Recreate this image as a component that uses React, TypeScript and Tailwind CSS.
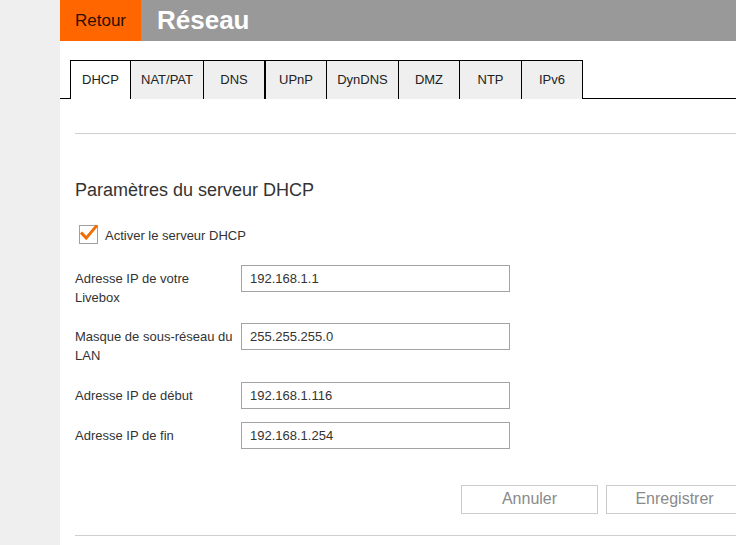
const TABS = [
  { label: "DHCP", w: "w-[61px]", active: true },
  { label: "NAT/PAT", w: "w-[73px]" },
  { label: "DNS", w: "w-[62px]", thick: true },
  { label: "UPnP", w: "w-[61px]" },
  { label: "DynDNS", w: "w-[72px]" },
  { label: "DMZ", w: "w-[61px]" },
  { label: "NTP", w: "w-[62px]" },
  { label: "IPv6", w: "w-[61px]" },
];

const CheckIcon = () => (
  <svg width="21" height="20" viewBox="0 0 21 20" aria-hidden>
    <rect x="1.5" y="1.5" width="18" height="18" fill="#fff" stroke="#a0a0a0" />
    <path d="M4 9.5l4.2 4.6L18 2.5" fill="none" stroke="#f16e00" strokeWidth="3" strokeLinecap="square" />
  </svg>
);

function Field({ label, value, className }: { label: string[]; value: string; className?: string }) {
  return (
    <div className={`flex items-start ${className ?? ""}`}>
      <div className="w-[166px] pt-[4px] text-[13px] leading-[19px] text-[#333]">
        {label.map((l) => (
          <div key={l}>{l}</div>
        ))}
      </div>
      <input
        readOnly
        value={value}
        className="h-[27px] w-[269px] border border-[#a3a3a3] bg-white px-[8px] text-[13px] text-[#333] outline-none"
      />
    </div>
  );
}

export default function App() {
  return (
    <div
      className="flex min-h-screen overflow-hidden bg-white"
      style={{ fontFamily: '"Liberation Sans", Arial, sans-serif' }}
    >
      {/* left rail */}
      <div className="w-[60px] shrink-0 bg-[#efefef]" />

      <div className="flex min-w-0 flex-1 flex-col">
        {/* header */}
        <header className="flex h-[41px]">
          <div className="flex w-[81px] items-center justify-center bg-[#ff6600] text-[17px] text-[#2a0f00]">
            Retour
          </div>
          <div className="flex flex-1 items-center bg-[#999999] pl-[16px] text-[26px] font-bold text-white">
            Réseau
          </div>
        </header>

        {/* tabs */}
        <nav className="mt-[19px] flex h-[39px]">
          <div className="w-[10px] border-b border-black" />
          {TABS.map((t) => (
            <div
              key={t.label}
              className={`flex ${t.w} shrink-0 items-center justify-center border-t border-black text-[13px] text-[#222] ${
                t.thick ? "border-r-2" : "border-r"
              } ${t.active ? "border-l bg-white" : "bg-[#efefef]"}`}
            >
              {t.label}
            </div>
          ))}
          <div className="flex-1 border-b border-black" />
        </nav>

        <div className="ml-[15px]">
          <div className="mt-[34px] border-t border-[#cfcfcf]" />

          <h2 className="mt-[45px] text-[18px] leading-[22px] text-[#333]">Paramètres du serveur DHCP</h2>

          <label className="mt-[21px] flex items-center gap-[6px] pl-[3px] text-[13px] text-[#333]">
            <CheckIcon />
            <span className="pt-[4px]">Activer le serveur DHCP</span>
          </label>

          <div className="w-[668px]">
            <Field className="mt-[19px]" label={["Adresse IP de votre", "Livebox"]} value="192.168.1.1" />
            <Field className="mt-[16px]" label={["Masque de sous-réseau du", "LAN"]} value="255.255.255.0" />
            <Field className="mt-[17px]" label={["Adresse IP de début"]} value="192.168.1.116" />
            <Field className="mt-[13px]" label={["Adresse IP de fin"]} value="192.168.1.254" />

            <div className="mt-[36px] flex justify-end gap-[8px]">
              <button className="h-[29px] w-[137px] border border-[#cccccc] bg-white text-[16px] text-[#8a8a8a]">
                Annuler
              </button>
              <button className="h-[29px] w-[137px] border border-[#cccccc] bg-white text-[16px] text-[#8a8a8a]">
                Enregistrer
              </button>
            </div>
          </div>

          <div className="mt-[21px] border-t border-[#cfcfcf]" />
        </div>
      </div>
    </div>
  );
}
